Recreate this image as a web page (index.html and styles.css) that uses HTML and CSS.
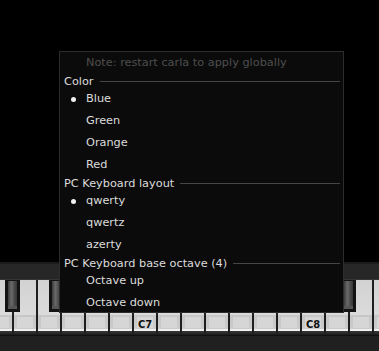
FILE: index.html
```html
<!DOCTYPE html>
<html>
  <head>
    <meta charset="utf-8">
    <title>Carla keyboard</title>
    <link rel="stylesheet" href="styles.css">
  </head>
  <body>
    <div class="stage"></div>

    <div class="piano">
      <div class="rail"></div>
      <div class="keys">
        <div class="white"><span class="black cs"></span></div>
        <div class="white"><span class="black ds"></span></div>
        <div class="white"></div>
        <div class="white"><span class="black fs"></span></div>
        <div class="white"><span class="black gs"></span></div>
        <div class="white"><span class="black as"></span></div>
        <div class="white"></div>
        <div class="white"><span class="black cs"></span><b>C7</b></div>
        <div class="white"><span class="black ds"></span></div>
        <div class="white"></div>
        <div class="white"><span class="black fs"></span></div>
        <div class="white"><span class="black gs"></span></div>
        <div class="white"><span class="black as"></span></div>
        <div class="white"></div>
        <div class="white"><span class="black cs"></span><b>C8</b></div>
        <div class="white"><span class="black ds"></span></div>
        <div class="white"></div>
        <div class="white"><span class="black fs"></span></div>
      </div>
      <div class="base"></div>
    </div>

    <!-- popup menu over the keyboard -->
    <div class="menu">
      <div class="item note">Note: restart carla to apply globally</div>
      <div class="section"><span>Color</span><i></i></div>
      <div class="item checked">Blue</div>
      <div class="item">Green</div>
      <div class="item">Orange</div>
      <div class="item">Red</div>
      <div class="section"><span>PC Keyboard layout</span><i></i></div>
      <div class="item checked">qwerty</div>
      <div class="item">qwertz</div>
      <div class="item">azerty</div>
      <div class="section"><span>PC Keyboard base octave (4)</span><i></i></div>
      <div class="item">Octave up</div>
      <div class="item last">Octave down</div>
    </div>
  </body>
</html>
```

FILE: styles.css
```css
html, body {
  margin: 0;
  height: 100%;
}
body {
  display: flex;
  flex-direction: column;
  background: #000;
  font-family: "DejaVu Sans", "Liberation Sans", sans-serif;
  font-size: 11.3px;
  overflow: hidden;
}
.stage {
  flex: 1;
}

/* keyboard */
.piano {
  overflow: hidden;
}
.rail {
  height: 15px;
  background: #272727;
  border-top: 2px solid #1c1c1c;
  border-bottom: 1px solid #353535;
}
.keys {
  display: flex;
  margin-left: -36px;
  height: 55px;
}
.white {
  position: relative;
  flex: none;
  width: 24px;
  height: 55px;
  box-sizing: border-box;
  border-left: 2px solid #1e1e1e;
  background: linear-gradient(to bottom,
    #d2d2d2 0, #dbdbdb 35px,
    #c6c6c6 35px, #cbcbcb 49px,
    #f0f0f0 49px, #f0f0f0 51px,
    #3a3a3a 51px, #1a1a1a 55px);
}
.white::after {
  content: "";
  position: absolute;
  left: 3px;
  right: 3px;
  top: 37px;
  height: 11px;
  background: #d6d6d6;
}
.white b {
  position: absolute;
  left: 0;
  right: 0;
  top: 38px;
  z-index: 1;
  text-align: center;
  font-family: "DejaVu Sans Condensed", "DejaVu Sans", sans-serif;
  font-size: 11px;
  line-height: 13px;
  color: #111;
}
.black {
  position: absolute;
  top: 0;
  z-index: 2;
  width: 15px;
  height: 32px;
  box-sizing: border-box;
  background: #131313;
}
.black::before {
  content: "";
  position: absolute;
  left: 3px;
  right: 3px;
  top: 1px;
  bottom: 6px;
  background: linear-gradient(to right, #3c3c3c, #6a6a6a 40%, #4a4a4a 70%, #363636);
}
.black::after {
  content: "";
  position: absolute;
  left: 3px;
  right: 3px;
  bottom: 3px;
  height: 3px;
  background: #555;
}
.cs { left: 12px; }
.ds { left: 15px; }
.fs { left: 11px; }
.gs { left: 14px; }
.as { left: 18px; }
.base {
  height: 15px;
  background: #202020;
  border-top: 1px solid #101010;
}

/* menu */
.menu {
  position: absolute;
  z-index: 10;
  left: 59px;
  top: 51px;
  width: 283px;
  border: 1px solid #2c2c2c;
  background: #0b0b0b;
  color: #dcdcdc;
}
.item {
  position: relative;
  height: 22px;
  line-height: 22px;
  padding-left: 26px;
  white-space: nowrap;
}
.note {
  color: #4e4e4e;
}
.last {
  height: 20px;
}
.checked::before {
  content: "";
  position: absolute;
  left: 11px;
  top: 9px;
  width: 5px;
  height: 5px;
  border-radius: 50%;
  background: #f0f0f0;
}
.section {
  display: flex;
  align-items: center;
  height: 14px;
  padding: 0 3px 0 4px;
  white-space: nowrap;
}
.section i {
  flex: 1;
  height: 1px;
  margin-left: 6px;
  background: #464646;
}
```
